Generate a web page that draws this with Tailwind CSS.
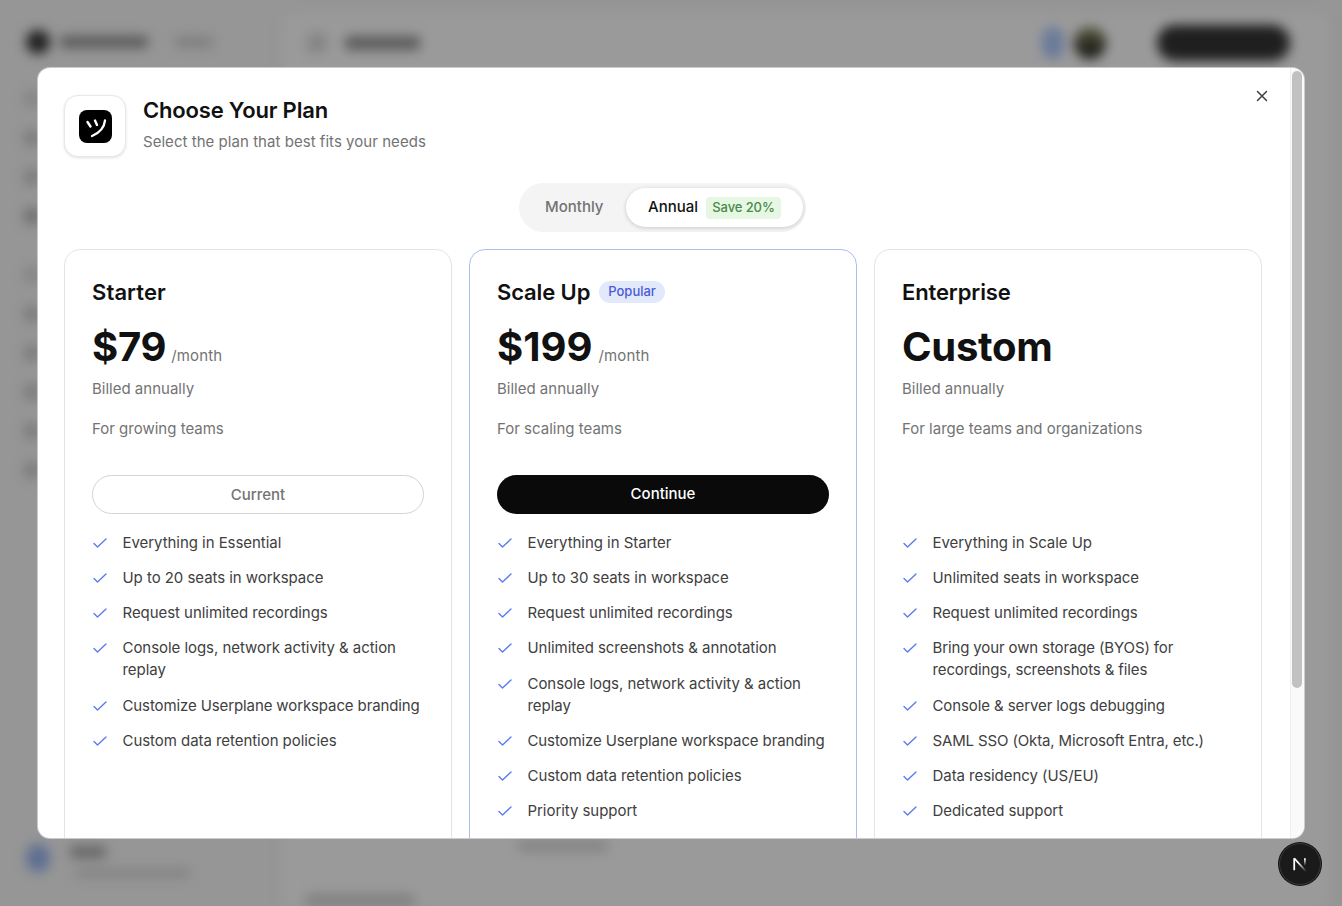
<!DOCTYPE html>
<html lang="en">
<head>
    <meta charset="UTF-8">
    <meta name="viewport" content="width=device-width, initial-scale=1.0">
    <title>Choose Your Plan</title>
    <script src="https://cdn.jsdelivr.net/npm/@tailwindcss/browser@4"></script>
</head>
<body class="relative h-[906px] w-[1342px] overflow-hidden bg-[#969696] font-['Inter',sans-serif]">

    <!-- Blurred page behind the dialog -->
    <div class="flex h-full blur-[6px]">
        <aside class="flex w-[283px] shrink-0 flex-col pl-[26px]">
            <div class="mt-[30px] flex items-center">
                <div class="h-6 w-6 rounded-full bg-[#222222]"></div>
                <div class="ml-[10px] h-3 w-[88px] rounded bg-[#5a5a5a]"></div>
                <div class="ml-[27px] h-2.5 w-[38px] rounded bg-[#7c7c7c]"></div>
            </div>
            <div class="mt-[37px] -ml-0.5 flex flex-col gap-[23px]">
                <div class="h-4 w-4 rounded bg-[#858585]"></div>
                <div class="h-4 w-4 rounded bg-[#7c7c7c]"></div>
                <div class="h-4 w-4 rounded bg-[#7c7c7c]"></div>
                <div class="h-4 w-4 rounded bg-[#707070]"></div>
            </div>
            <div class="mt-[43px] -ml-0.5 flex flex-col gap-[23px]">
                <div class="h-4 w-4 rounded bg-[#858585]"></div>
                <div class="h-4 w-4 rounded bg-[#7c7c7c]"></div>
                <div class="h-4 w-4 rounded bg-[#7c7c7c]"></div>
                <div class="h-4 w-4 rounded bg-[#7c7c7c]"></div>
                <div class="h-4 w-4 rounded bg-[#7c7c7c]"></div>
                <div class="h-4 w-4 rounded bg-[#7c7c7c]"></div>
            </div>
            <div class="mt-auto mb-[29px] flex items-start gap-5">
                <div class="-mt-0.5 h-7 w-6 rounded-full bg-[#5f6f92]"></div>
                <div>
                    <div class="h-3 w-9 rounded bg-[#666666]"></div>
                    <div class="mt-[11px] ml-[5px] h-2 w-[115px] rounded bg-[#808080]"></div>
                </div>
            </div>
        </aside>
        <main class="mt-[14px] mr-[14px] flex flex-1 flex-col rounded-t-lg bg-[#9a9a9a]">
            <div class="flex items-center pl-6 pr-[38px] pt-[11px]">
                <div class="h-5 w-5 rounded bg-[#858585]"></div>
                <div class="ml-[18px] h-3.5 w-[75px] rounded bg-[#5c5c5c]"></div>
                <div class="ml-auto h-8 w-[22px] rounded-full bg-[#6a7a9a]"></div>
                <div class="ml-[10px] h-8 w-8 rounded-full bg-gradient-to-b from-[#5a5a40] to-[#0f0f0f]"></div>
                <div class="ml-[51px] h-9 w-[133px] rounded-full bg-[#1f1f1f]"></div>
            </div>
            <div class="mt-auto ml-[235px] h-3 w-[90px] rounded bg-[#858585]"></div>
            <div class="mt-[42px] ml-[22px] h-3 w-[110px] rounded bg-[#808080]"></div>
        </main>
    </div>

    <!-- Dialog -->
    <div class="absolute left-[38px] top-[68px] flex h-[770px] w-[1266px] overflow-hidden rounded-xl bg-white shadow-[0_0_0_1px_rgba(255,255,255,0.5)]">
        <div class="relative w-[1252px] shrink-0 pl-[26px] pt-[27px]">
            <button class="absolute right-[19px] top-[19px] text-[#3f3f46]">
                <svg class="h-[18px] w-[18px]" viewBox="0 0 24 24" fill="none" stroke="currentColor" stroke-width="2" stroke-linecap="round"><path d="M6 6l12 12M18 6L6 18"/></svg>
            </button>

            <header class="flex items-start gap-[17px]">
                <div class="flex h-[62px] w-[62px] items-center justify-center rounded-[14px] border border-[#e8e8e8] bg-white shadow-[0_1px_3px_rgba(0,0,0,0.12)]">
                    <div class="flex h-[33px] w-[33px] items-center justify-center rounded-lg bg-black">
                        <svg class="h-[33px] w-[33px]" viewBox="0 0 33 33" fill="none" stroke="white" stroke-width="2.400" stroke-linecap="round"><path d="M8.500 12l3 4.500M16 10.500l2 4.500M26 10.500c-.5 5-3.500 11.500-13 15.500"/></svg>
                    </div>
                </div>
                <div class="pt-[1px]">
                    <h2 class="text-[22px] leading-[28px] font-semibold tracking-[-0.18px] text-[#111111]">Choose Your Plan</h2>
                    <p class="mt-[7px] text-[15px] leading-[22px] tracking-[0.04px] text-[#737373]">Select the plan that best fits your needs</p>
                </div>
            </header>

            <div class="mt-[26px] flex w-[1197px] justify-center">
                <div class="flex h-[49px] items-center rounded-full bg-[#f4f4f5] pl-[26px] pr-[3px]">
                    <span class="w-[81px] text-[15px] font-medium text-[#737373]">Monthly</span>
                    <div class="flex h-[39px] w-[177px] items-center gap-2 rounded-full bg-white pl-[22px] shadow-[0_1px_4px_rgba(0,0,0,0.18)]">
                        <span class="text-[15px] font-medium text-[#111111]">Annual</span>
                        <span class="flex h-[22px] w-[75px] items-center justify-center rounded bg-[#e6f8e4] text-[13px] font-medium tracking-[-0.1px] text-[#4a8a4a]">Save 20%</span>
                    </div>
                </div>
            </div>

            <div class="mt-[17px] grid w-[1198px] grid-cols-[388px_388px_388px] gap-[17px]">
                <!-- Starter -->
                <section class="h-[640px] rounded-2xl border border-[#e4e4e7] px-[27px] pt-[27px]">
                    <h3 class="text-[22px] leading-[30px] font-semibold tracking-[0.1px] text-[#111111]">Starter</h3>
                    <div class="mt-[15px] flex h-[50px] items-baseline gap-[5px]">
                        <span class="text-[40px] leading-[50px] font-bold tracking-[-0.3px] text-[#111111]">$79</span>
                        <span class="text-[15px] tracking-[0.15px] text-[#737373]">/month</span>
                    </div>
                    <p class="mt-[6px] text-[15px] leading-[22.5px] text-[#737373]">Billed annually</p>
                    <p class="mt-[17.5px] text-[15px] leading-[22.5px] text-[#737373]">For growing teams</p>
                    <button class="mt-[34.5px] flex h-[39px] w-full items-center justify-center rounded-full border border-[#d4d4d8] pt-[1px] text-[15px] font-medium text-[#737373]">Current</button>
                    <ul class="mt-[18.15px] flex flex-col gap-[13.1px] text-[15px] leading-[22px] tracking-[-0.05px] text-[#404040]">
                        <li class="flex gap-[14.5px]"><svg class="mt-[3px] h-4 w-4 shrink-0 text-[#5b7cf0]" viewBox="0 0 16 16" fill="none" stroke="currentColor" stroke-width="1.400" stroke-linecap="round" stroke-linejoin="round"><path d="M2 8.500l3.500 3.500L14 4"/></svg>Everything in Essential</li>
                        <li class="flex gap-[14.5px]"><svg class="mt-[3px] h-4 w-4 shrink-0 text-[#5b7cf0]" viewBox="0 0 16 16" fill="none" stroke="currentColor" stroke-width="1.400" stroke-linecap="round" stroke-linejoin="round"><path d="M2 8.500l3.500 3.500L14 4"/></svg>Up to 20 seats in workspace</li>
                        <li class="flex gap-[14.5px]"><svg class="mt-[3px] h-4 w-4 shrink-0 text-[#5b7cf0]" viewBox="0 0 16 16" fill="none" stroke="currentColor" stroke-width="1.400" stroke-linecap="round" stroke-linejoin="round"><path d="M2 8.500l3.500 3.500L14 4"/></svg>Request unlimited recordings</li>
                        <li class="flex gap-[14.5px]"><svg class="mt-[3px] h-4 w-4 shrink-0 text-[#5b7cf0]" viewBox="0 0 16 16" fill="none" stroke="currentColor" stroke-width="1.400" stroke-linecap="round" stroke-linejoin="round"><path d="M2 8.500l3.500 3.500L14 4"/></svg>Console logs, network activity &amp; action replay</li>
                        <li class="flex gap-[14.5px]"><svg class="mt-[3px] h-4 w-4 shrink-0 text-[#5b7cf0]" viewBox="0 0 16 16" fill="none" stroke="currentColor" stroke-width="1.400" stroke-linecap="round" stroke-linejoin="round"><path d="M2 8.500l3.500 3.500L14 4"/></svg><span class="tracking-[-0.11px]">Customize Userplane workspace branding</span></li>
                        <li class="flex gap-[14.5px]"><svg class="mt-[3px] h-4 w-4 shrink-0 text-[#5b7cf0]" viewBox="0 0 16 16" fill="none" stroke="currentColor" stroke-width="1.400" stroke-linecap="round" stroke-linejoin="round"><path d="M2 8.500l3.500 3.500L14 4"/></svg>Custom data retention policies</li>
                    </ul>
                </section>

                <!-- Scale Up -->
                <section class="h-[640px] rounded-2xl border border-[#a9c0ea] px-[27px] pt-[27px]">
                    <div class="flex items-center gap-[9px]">
                        <h3 class="text-[22px] leading-[30px] font-semibold tracking-[-0.12px] text-[#111111]">Scale Up</h3>
                        <span class="flex h-[22px] items-center rounded-full bg-[#e2e9fb] px-[9px] text-[13px] font-medium text-[#4a5bd8]">Popular</span>
                    </div>
                    <div class="mt-[15px] flex h-[50px] items-baseline gap-[6px]">
                        <span class="text-[40px] leading-[50px] font-bold text-[#111111]">$199</span>
                        <span class="text-[15px] tracking-[0.15px] text-[#737373]">/month</span>
                    </div>
                    <p class="mt-[6px] text-[15px] leading-[22.5px] text-[#737373]">Billed annually</p>
                    <p class="mt-[17.5px] text-[15px] leading-[22.5px] text-[#737373]">For scaling teams</p>
                    <button class="mt-[34.5px] flex h-[39px] w-full items-center justify-center rounded-full bg-[#0a0a0a] text-[15px] font-medium text-white">Continue</button>
                    <ul class="mt-[18.15px] flex flex-col gap-[13.1px] text-[15px] leading-[22px] tracking-[-0.05px] text-[#404040]">
                        <li class="flex gap-[14.5px]"><svg class="mt-[3px] h-4 w-4 shrink-0 text-[#5b7cf0]" viewBox="0 0 16 16" fill="none" stroke="currentColor" stroke-width="1.400" stroke-linecap="round" stroke-linejoin="round"><path d="M2 8.500l3.500 3.500L14 4"/></svg>Everything in Starter</li>
                        <li class="flex gap-[14.5px]"><svg class="mt-[3px] h-4 w-4 shrink-0 text-[#5b7cf0]" viewBox="0 0 16 16" fill="none" stroke="currentColor" stroke-width="1.400" stroke-linecap="round" stroke-linejoin="round"><path d="M2 8.500l3.500 3.500L14 4"/></svg>Up to 30 seats in workspace</li>
                        <li class="flex gap-[14.5px]"><svg class="mt-[3px] h-4 w-4 shrink-0 text-[#5b7cf0]" viewBox="0 0 16 16" fill="none" stroke="currentColor" stroke-width="1.400" stroke-linecap="round" stroke-linejoin="round"><path d="M2 8.500l3.500 3.500L14 4"/></svg>Request unlimited recordings</li>
                        <li class="flex gap-[14.5px]"><svg class="mt-[3px] h-4 w-4 shrink-0 text-[#5b7cf0]" viewBox="0 0 16 16" fill="none" stroke="currentColor" stroke-width="1.400" stroke-linecap="round" stroke-linejoin="round"><path d="M2 8.500l3.500 3.500L14 4"/></svg>Unlimited screenshots &amp; annotation</li>
                        <li class="flex gap-[14.5px]"><svg class="mt-[3px] h-4 w-4 shrink-0 text-[#5b7cf0]" viewBox="0 0 16 16" fill="none" stroke="currentColor" stroke-width="1.400" stroke-linecap="round" stroke-linejoin="round"><path d="M2 8.500l3.500 3.500L14 4"/></svg>Console logs, network activity &amp; action replay</li>
                        <li class="flex gap-[14.5px]"><svg class="mt-[3px] h-4 w-4 shrink-0 text-[#5b7cf0]" viewBox="0 0 16 16" fill="none" stroke="currentColor" stroke-width="1.400" stroke-linecap="round" stroke-linejoin="round"><path d="M2 8.500l3.500 3.500L14 4"/></svg><span class="tracking-[-0.11px]">Customize Userplane workspace branding</span></li>
                        <li class="flex gap-[14.5px]"><svg class="mt-[3px] h-4 w-4 shrink-0 text-[#5b7cf0]" viewBox="0 0 16 16" fill="none" stroke="currentColor" stroke-width="1.400" stroke-linecap="round" stroke-linejoin="round"><path d="M2 8.500l3.500 3.500L14 4"/></svg>Custom data retention policies</li>
                        <li class="flex gap-[14.5px]"><svg class="mt-[3px] h-4 w-4 shrink-0 text-[#5b7cf0]" viewBox="0 0 16 16" fill="none" stroke="currentColor" stroke-width="1.400" stroke-linecap="round" stroke-linejoin="round"><path d="M2 8.500l3.500 3.500L14 4"/></svg>Priority support</li>
                    </ul>
                </section>

                <!-- Enterprise -->
                <section class="h-[640px] rounded-2xl border border-[#e4e4e7] px-[27px] pt-[27px]">
                    <h3 class="text-[22px] leading-[30px] font-semibold tracking-[-0.12px] text-[#111111]">Enterprise</h3>
                    <div class="mt-[15px] flex h-[50px] items-baseline">
                        <span class="text-[40px] leading-[50px] font-bold tracking-[-0.3px] text-[#111111]">Custom</span>
                    </div>
                    <p class="mt-[6px] text-[15px] leading-[22.5px] text-[#737373]">Billed annually</p>
                    <p class="mt-[17.5px] text-[15px] leading-[22.5px] text-[#737373]">For large teams and organizations</p>
                    <div class="mt-[34.5px] h-[39px]"></div>
                    <ul class="mt-[18.15px] flex flex-col gap-[13.1px] text-[15px] leading-[22px] tracking-[-0.05px] text-[#404040]">
                        <li class="flex gap-[14.5px]"><svg class="mt-[3px] h-4 w-4 shrink-0 text-[#5b7cf0]" viewBox="0 0 16 16" fill="none" stroke="currentColor" stroke-width="1.400" stroke-linecap="round" stroke-linejoin="round"><path d="M2 8.500l3.500 3.500L14 4"/></svg>Everything in Scale Up</li>
                        <li class="flex gap-[14.5px]"><svg class="mt-[3px] h-4 w-4 shrink-0 text-[#5b7cf0]" viewBox="0 0 16 16" fill="none" stroke="currentColor" stroke-width="1.400" stroke-linecap="round" stroke-linejoin="round"><path d="M2 8.500l3.500 3.500L14 4"/></svg>Unlimited seats in workspace</li>
                        <li class="flex gap-[14.5px]"><svg class="mt-[3px] h-4 w-4 shrink-0 text-[#5b7cf0]" viewBox="0 0 16 16" fill="none" stroke="currentColor" stroke-width="1.400" stroke-linecap="round" stroke-linejoin="round"><path d="M2 8.500l3.500 3.500L14 4"/></svg>Request unlimited recordings</li>
                        <li class="flex gap-[14.5px]"><svg class="mt-[3px] h-4 w-4 shrink-0 text-[#5b7cf0]" viewBox="0 0 16 16" fill="none" stroke="currentColor" stroke-width="1.400" stroke-linecap="round" stroke-linejoin="round"><path d="M2 8.500l3.500 3.500L14 4"/></svg><span class="tracking-[-0.13px]">Bring your own storage (BYOS) for recordings, screenshots &amp; files</span></li>
                        <li class="flex gap-[14.5px]"><svg class="mt-[3px] h-4 w-4 shrink-0 text-[#5b7cf0]" viewBox="0 0 16 16" fill="none" stroke="currentColor" stroke-width="1.400" stroke-linecap="round" stroke-linejoin="round"><path d="M2 8.500l3.500 3.500L14 4"/></svg><span class="tracking-[-0.1px]">Console &amp; server logs debugging</span></li>
                        <li class="flex gap-[14.5px]"><svg class="mt-[3px] h-4 w-4 shrink-0 text-[#5b7cf0]" viewBox="0 0 16 16" fill="none" stroke="currentColor" stroke-width="1.400" stroke-linecap="round" stroke-linejoin="round"><path d="M2 8.500l3.500 3.500L14 4"/></svg><span class="tracking-[-0.14px]">SAML SSO (Okta, Microsoft Entra, etc.)</span></li>
                        <li class="flex gap-[14.5px]"><svg class="mt-[3px] h-4 w-4 shrink-0 text-[#5b7cf0]" viewBox="0 0 16 16" fill="none" stroke="currentColor" stroke-width="1.400" stroke-linecap="round" stroke-linejoin="round"><path d="M2 8.500l3.500 3.500L14 4"/></svg>Data residency (US/EU)</li>
                        <li class="flex gap-[14.5px]"><svg class="mt-[3px] h-4 w-4 shrink-0 text-[#5b7cf0]" viewBox="0 0 16 16" fill="none" stroke="currentColor" stroke-width="1.400" stroke-linecap="round" stroke-linejoin="round"><path d="M2 8.500l3.500 3.500L14 4"/></svg>Dedicated support</li>
                    </ul>
                </section>
            </div>
        </div>

        <!-- Scrollbar -->
        <div class="flex-1 border-l border-[#efefef] bg-[#fafafa] pl-[1px] pt-[3px]">
            <div class="h-[617px] w-[10px] rounded-full bg-[#c1c1c1]"></div>
        </div>
    </div>

    <!-- Next.js dev indicator -->
    <div class="absolute left-[1279px] top-[843px] flex h-[42px] w-[42px] items-center justify-center rounded-full border border-[#3a3a3a] bg-[#1a1a1a] shadow-[0_0_0_1px_#111111]">
        <svg class="h-4 w-4" viewBox="0 0 18 18" fill="none">
            <defs>
                <linearGradient id="nfade" x1="8" y1="7" x2="15" y2="16" gradientUnits="userSpaceOnUse">
                    <stop stop-color="#ffffff"/>
                    <stop offset="1" stop-color="#ffffff" stop-opacity="0.1"/>
                </linearGradient>
                <linearGradient id="nfade2" x1="14" y1="3" x2="14" y2="11" gradientUnits="userSpaceOnUse">
                    <stop stop-color="#ffffff"/>
                    <stop offset="1" stop-color="#ffffff" stop-opacity="0"/>
                </linearGradient>
            </defs>
            <path d="M2.500 16V2.500" stroke="white" stroke-width="2"/>
            <path d="M2.500 2.500L15.500 17" stroke="url(#nfade)" stroke-width="2"/>
            <path d="M14.500 2.500V11" stroke="url(#nfade2)" stroke-width="2"/>
        </svg>
    </div>

</body>
</html>
